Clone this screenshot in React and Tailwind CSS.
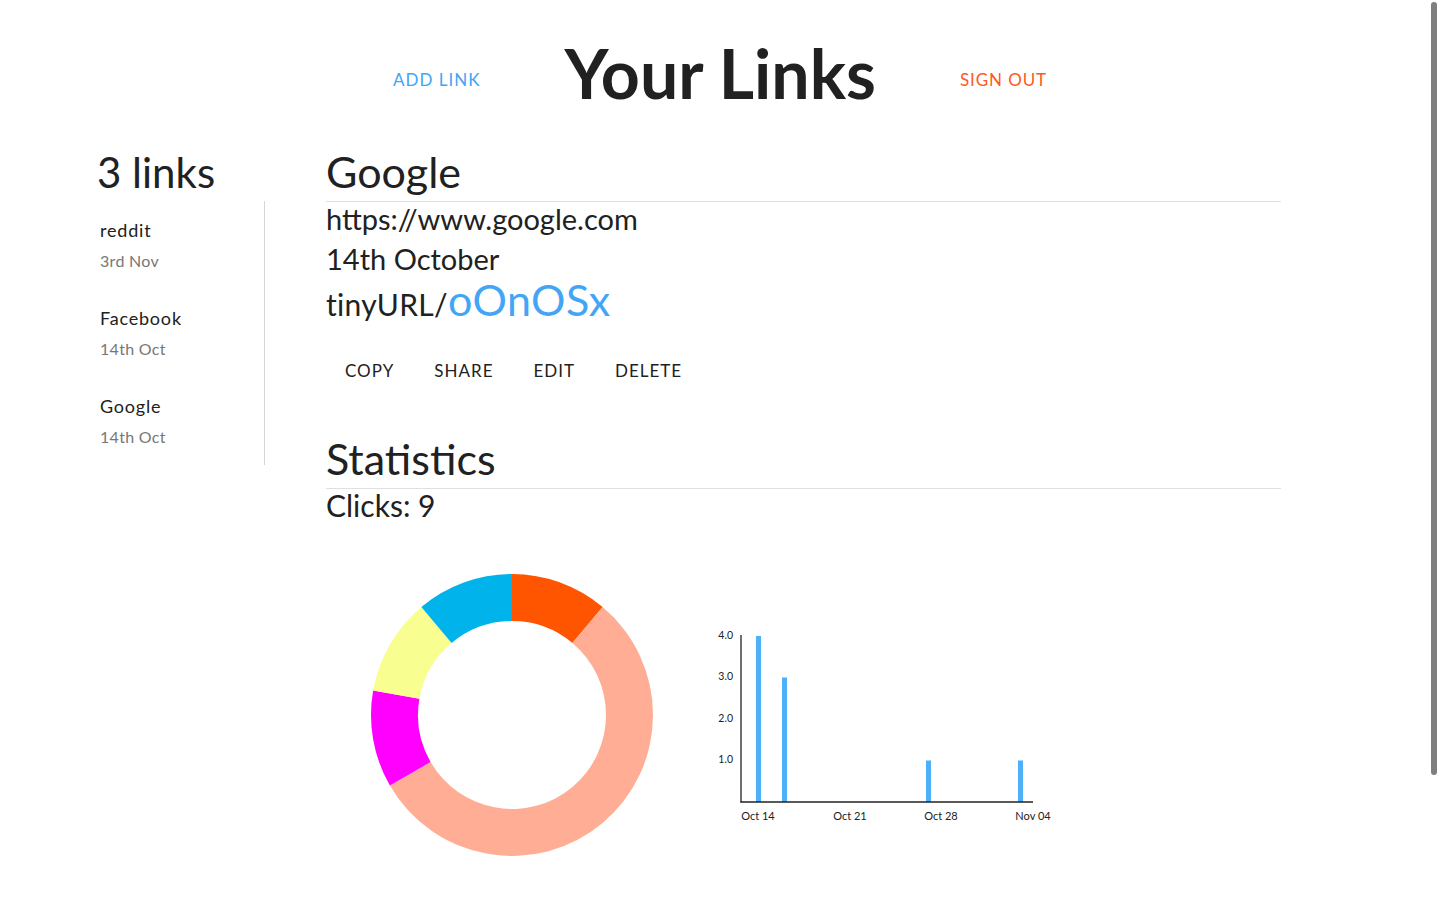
import React from 'react';

const links = [
  { name: 'reddit', date: '3rd Nov' },
  { name: 'Facebook', date: '14th Oct' },
  { name: 'Google', date: '14th Oct' },
];

const slices = [
  { value: 1, color: '#ff5500' },
  { value: 5, color: '#ffad94' },
  { value: 1, color: '#ff00ff' },
  { value: 1, color: '#f8ff90' },
  { value: 1, color: '#00b4eb' },
];

const polar = (cx, cy, r, deg) => {
  const a = ((deg - 90) * Math.PI) / 180;
  return [cx + r * Math.cos(a), cy + r * Math.sin(a)];
};

const Donut = () => {
  const total = slices.reduce((s, x) => s + x.value, 0);
  let start = 0;
  const R = 141;
  const r = 94;
  return (
    <svg width="300" height="300" viewBox="0 0 300 300">
      {slices.map((s, i) => {
        const sweep = (s.value / total) * 360;
        const end = start + sweep;
        const large = sweep > 180 ? 1 : 0;
        const [x1, y1] = polar(150, 150, R, start);
        const [x2, y2] = polar(150, 150, R, end);
        const [x3, y3] = polar(150, 150, r, end);
        const [x4, y4] = polar(150, 150, r, start);
        const d = `M${x1} ${y1} A${R} ${R} 0 ${large} 1 ${x2} ${y2} L${x3} ${y3} A${r} ${r} 0 ${large} 0 ${x4} ${y4} Z`;
        start = end;
        return <path key={i} d={d} fill={s.color} />;
      })}
    </svg>
  );
};

const bars = [
  { x: 58.5, v: 4 },
  { x: 84.5, v: 3 },
  { x: 228.5, v: 1 },
  { x: 320.5, v: 1 },
];

const BarChart = () => (
  <svg width="370" height="220" viewBox="0 0 370 220" style={{ fontFamily: 'Lato, sans-serif' }}>
    {bars.map((b, i) => (
      <rect key={i} x={b.x - 2.5} y={181 - b.v * 41.5} width="5" height={b.v * 41.5} fill="#4db0f8" />
    ))}
    <line x1="41" y1="14" x2="41" y2="181.5" stroke="#222" strokeWidth="1.3" />
    <line x1="40.5" y1="181" x2="333" y2="181" stroke="#222" strokeWidth="1.3" />
    {[
      ['4.0', 15],
      ['3.0', 56.5],
      ['2.0', 98],
      ['1.0', 139.5],
    ].map(([t, y]) => (
      <text key={t} x="33" y={y} textAnchor="end" dominantBaseline="middle" fontSize="10.5" fill="#222">
        {t}
      </text>
    ))}
    {[
      ['Oct 14', 58],
      ['Oct 21', 150],
      ['Oct 28', 241],
      ['Nov 04', 333],
    ].map(([t, x]) => (
      <text key={t} x={x} y="196" textAnchor="middle" dominantBaseline="middle" fontSize="11" fill="#222">
        {t}
      </text>
    ))}
  </svg>
);

const App = () => {
  return (
    <div className="h-[900px] overflow-hidden bg-white text-[#212121]" style={{ fontFamily: 'Lato, "Open Sans", sans-serif' }}>
      {/* header */}
      <header className="flex items-start justify-center gap-[84px] pt-[33px]">
        <button className="mt-[34px] text-[17px] leading-[25px] tracking-[1px] text-[#42a5f5] uppercase">Add Link</button>
        <h1 className="text-[68px] leading-[80px] font-bold">Your Links</h1>
        <button className="mt-[34px] text-[17px] leading-[25px] tracking-[0.9px] text-[#ff5722] uppercase">Sign Out</button>
      </header>

      <div className="flex pl-[97px] mt-[35px]">
        {/* sidebar */}
        <aside className="w-[168px] shrink-0">
          <h2 className="text-[42px] leading-[48px] pb-[5px]">3 links</h2>
          <ul className="border-r border-[#d6d6d6]">
            {links.map((l) => (
              <li key={l.name} className="h-[88px] pt-[18px] pl-[3px]">
                <div className="text-[18px] leading-[22px] tracking-[0.8px]">{l.name}</div>
                <div className="text-[16px] leading-[20px] mt-[10px] text-[#777] tracking-[0.3px]">{l.date}</div>
              </li>
            ))}
          </ul>
        </aside>

        {/* main */}
        <main className="ml-[61px] w-[955px]">
          <h2 className="text-[43px] leading-[48px] pb-[5px] border-b border-[#e0e0e0]">Google</h2>
          <p className="text-[29px] leading-[34px]">https://www.google.com</p>
          <p className="text-[29px] leading-[32px] mt-[7px]">14th October</p>
          <p className="text-[30px] leading-[50px] tracking-[0.3px]">
            tinyURL/<span className="text-[43px] text-[#42a5f5] tracking-[0.5px]">oOnOSx</span>
          </p>
          <div className="flex mt-[24px] -ml-[1px]">
            {['Copy', 'Share', 'Edit', 'Delete'].map((b) => (
              <button key={b} className="h-[36px] px-5 text-[17px] leading-[36px] tracking-[1px] uppercase">
                {b}
              </button>
            ))}
          </div>

          <h2 className="text-[43px] leading-[48px] pb-[5px] mt-[46px] border-b border-[#e0e0e0]">Statistics</h2>
          <p className="text-[30px] leading-[32px]">Clicks: 9</p>

          <div className="flex items-start mt-[44px] ml-[36px] gap-[38px]">
            <Donut />
            <div className="mt-[56px]">
              <BarChart />
            </div>
          </div>
        </main>
      </div>

      {/* overlay scrollbar */}
      <div className="fixed right-[3px] top-[2px] w-[6px] h-[773px] rounded-full bg-[#7f7f7f]" />
    </div>
  );
};

export default App;
